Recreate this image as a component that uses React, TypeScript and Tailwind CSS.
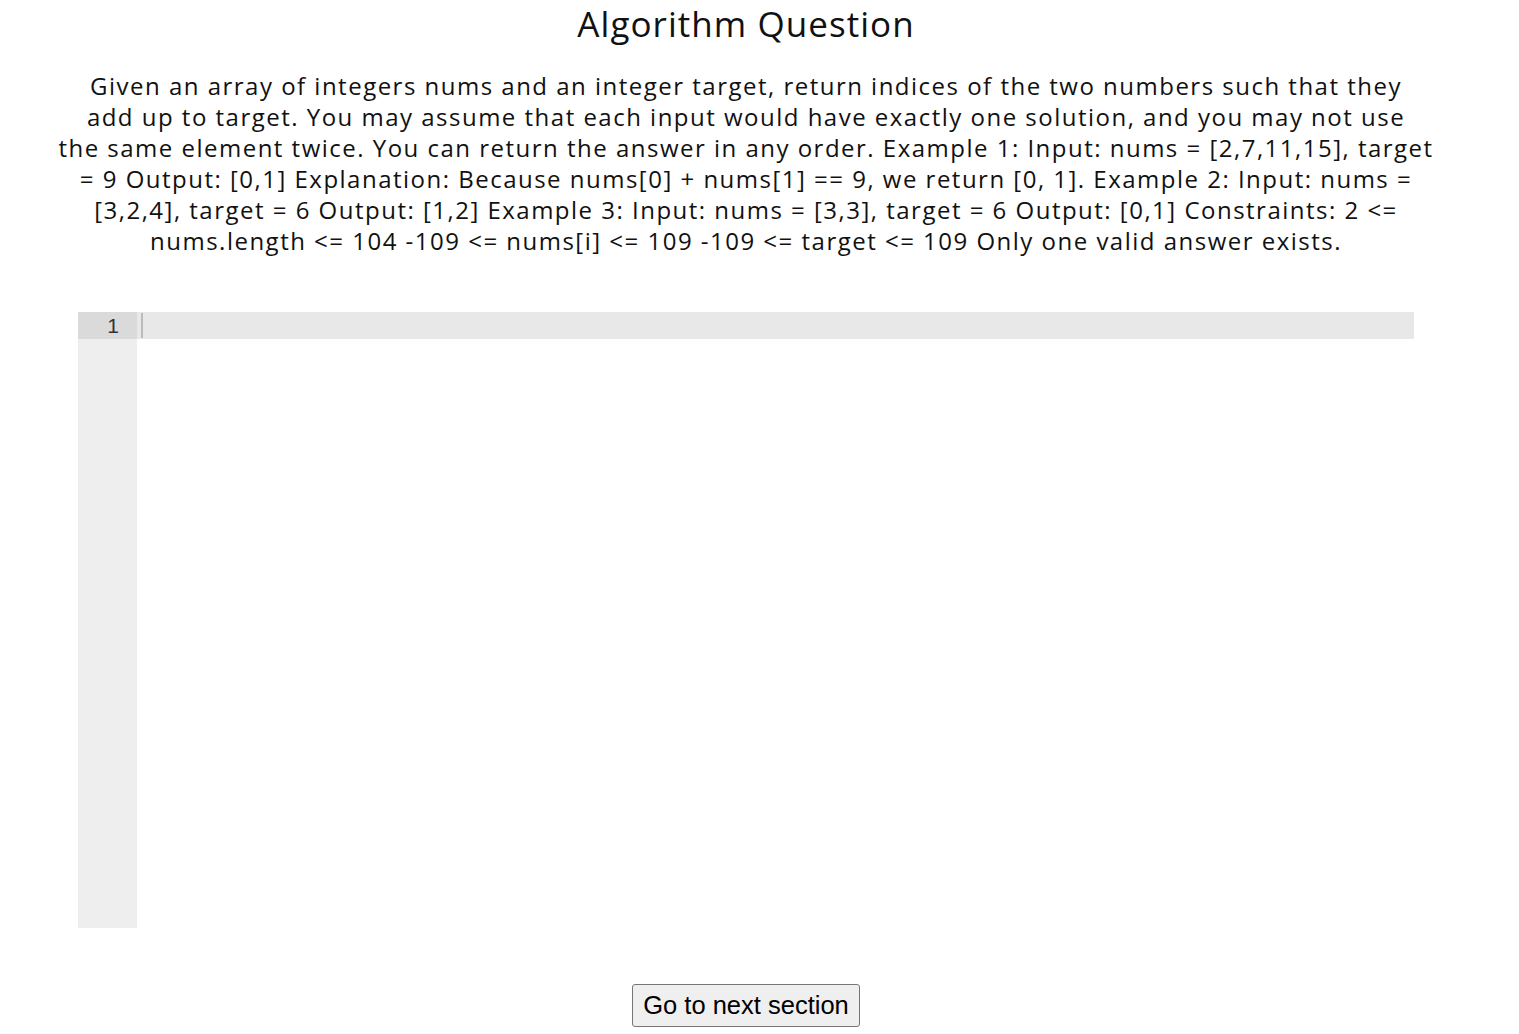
const lines = [
  "Given an array of integers nums and an integer target, return indices of the two numbers such that they",
  "add up to target. You may assume that each input would have exactly one solution, and you may not use",
  "the same element twice. You can return the answer in any order. Example 1: Input: nums = [2,7,11,15], target",
  "= 9 Output: [0,1] Explanation: Because nums[0] + nums[1] == 9, we return [0, 1]. Example 2: Input: nums =",
  "[3,2,4], target = 6 Output: [1,2] Example 3: Input: nums = [3,3], target = 6 Output: [0,1] Constraints: 2 <=",
  "nums.length <= 104 -109 <= nums[i] <= 109 -109 <= target <= 109 Only one valid answer exists.",
];

export default function App() {
  return (
    <div className="min-h-screen bg-white text-black font-['Open_Sans',sans-serif]">
      <div className="w-[1336px] ml-[78px] flex flex-col items-center">
        {/* Title */}
        <h1 className="h-[47px] leading-[47px] text-[35px] tracking-[0.03em] text-[#111]">Algorithm Question</h1>

        {/* Question text */}
        <div className="mt-[23px] text-center text-[24px] leading-[31px] tracking-[0.062em] text-[#111]">
          {lines.map((l, i) => (
            <div key={i} className="whitespace-nowrap">
              {l}
            </div>
          ))}
        </div>

        {/* Code editor */}
        <div className="mt-[56px] w-full h-[616px] flex bg-white">
          <div className="w-[59px] bg-[#eeeeee] flex flex-col">
            <div className="h-[27px] bg-[#dadada] text-right pr-[18px] text-[21px] leading-[27px] text-[#333] font-['Liberation_Sans',sans-serif]">
              1
            </div>
          </div>
          <div className="flex-1">
            <div className="h-[27px] bg-[#e8e8e8] flex items-center pl-[4px]">
              <div className="w-[2px] h-[25px] bg-[#bbbbbb]" />
            </div>
          </div>
        </div>

        {/* Next button */}
        <button className="mt-[56px] h-[43px] px-[10px] bg-[#efefef] border border-[#767676] rounded-[3px] text-[25.5px] text-black font-['Liberation_Sans',sans-serif]">
          Go to next section
        </button>
      </div>
    </div>
  );
}
